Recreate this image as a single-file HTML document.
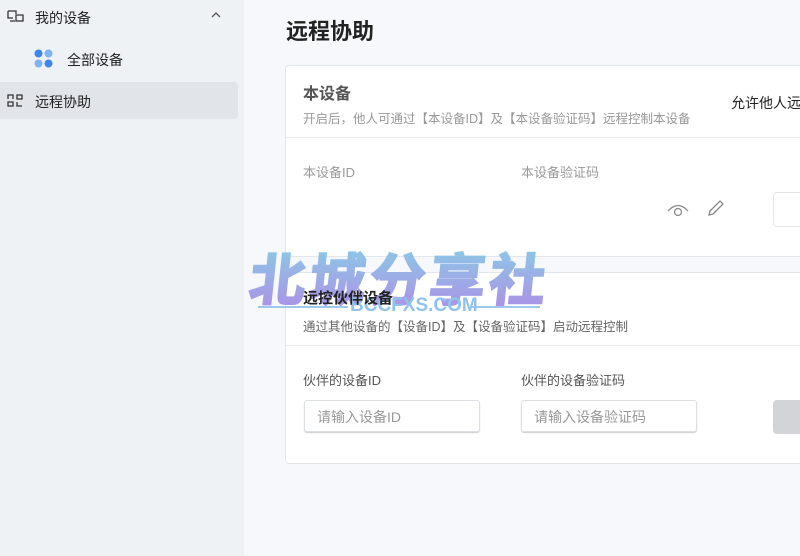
<!DOCTYPE html><html><head><meta charset="utf-8"><style>
body{margin:0;width:800px;height:556px;overflow:hidden;background:#f6f8fb;font-family:"Liberation Sans","Noto Sans CJK SC",sans-serif;position:relative;color:#222}
.side{position:absolute;left:0;top:0;width:244px;height:556px;background:#eff2f5}
.it{position:absolute;font-size:14px;color:#222}
.card{position:absolute;left:285px;width:540px;background:#fff;border:1px solid #e3e6ea;border-radius:4px}
.g{color:#888;font-size:13px;position:absolute}
.inp{position:absolute;width:176px;height:32px;border:1px solid #dcdfe3;border-radius:3px;box-shadow:0 1px 1px #ccc;font-size:14px;color:#999;line-height:32px;padding-left:12px;box-sizing:border-box}
</style></head><body>
<div class="side">
<svg style="position:absolute;left:7px;top:10px" width="18" height="14" fill="none" stroke="#333" stroke-width="1.3"><path d="M1 1h8v3M1 1v7h5M3 11h5M9 5h7v6H9z"/></svg>
<div class="it" style="left:35px;top:8px">我的设备</div>
<svg style="position:absolute;left:211px;top:11px" width="10" height="7" fill="none" stroke="#555" stroke-width="1.3"><path d="M1 6l4-4 4 4"/></svg>
<svg style="position:absolute;left:34px;top:49px" width="20" height="20"><circle cx="4.5" cy="4.5" r="4" fill="#3d86f0"/><circle cx="14.5" cy="4.5" r="4" fill="#7fb3f5"/><circle cx="4.5" cy="14.5" r="4" fill="#7fb3f5"/><circle cx="14.5" cy="14.5" r="4" fill="#3d86f0"/></svg>
<div class="it" style="left:67px;top:50px">全部设备</div>
<div style="position:absolute;left:0;top:82px;width:238px;height:37px;background:#e1e5ea;border-radius:0 4px 4px 0"></div>
<svg style="position:absolute;left:7px;top:94px" width="16" height="13" fill="none" stroke="#333" stroke-width="1.3"><path d="M1 5V1h5v4M10 1h5v4h-5zM1 8h5v4H1zM10 8v4h5"/></svg>
<div class="it" style="left:35px;top:92px">远程协助</div>
</div>
<div style="position:absolute;left:286px;top:14px;font-size:22px;font-weight:bold">远程协助</div>
<div class="card" style="top:65px;height:190px">
<div style="position:absolute;left:17px;top:14px;font-size:16px;font-weight:bold;color:#555">本设备</div>
<div class="g" style="left:17px;top:42px;color:#999;font-size:12.5px">开启后，他人可通过【本设备ID】及【本设备验证码】远程控制本设备</div>
<div style="position:absolute;left:445px;top:27px;font-size:14px">允许他人远程</div>
<div style="position:absolute;left:0;right:0;top:71px;border-top:1px solid #e8eaed"></div>
<div class="g" style="left:17px;top:96px;color:#999">本设备ID</div>
<div class="g" style="left:235px;top:96px;color:#999">本设备验证码</div>
<svg style="position:absolute;left:381px;top:137px" width="22" height="14" fill="none" stroke="#888" stroke-width="1.3"><path d="M1 8Q11-3 21 8"/><circle cx="11" cy="9" r="3.5"/></svg>
<svg style="position:absolute;left:421px;top:133px" width="18" height="18" fill="none" stroke="#888" stroke-width="1.3"><path d="M2 16l1-4L13 2l3 3L6 15z"/></svg>
<div style="position:absolute;left:487px;top:126px;width:60px;height:33px;border:1px solid #e3e6ea;border-radius:4px"></div>
</div>
<div style="position:absolute;left:250px;top:236px;z-index:1;font-size:56px;font-weight:bold;letter-spacing:4px;background:linear-gradient(#86d3e6,#b08ae6);-webkit-background-clip:text;color:transparent;-webkit-text-stroke:2px transparent;transform:skewX(-6deg);font-family:'Noto Sans CJK SC',sans-serif">北城分享社</div>
<div style="position:absolute;left:258px;top:306px;width:90px;border-top:2px solid #9ec9ec;z-index:1"></div>
<div style="position:absolute;left:470px;top:306px;width:70px;border-top:2px solid #9ec9ec;z-index:1"></div>
<div style="position:absolute;left:350px;top:295px;font-size:19px;color:#8fc3ec;font-weight:bold;z-index:1">BCCFXS.COM</div>
<div class="card" style="top:272px;height:190px;background:transparent;border:none"></div>
<div class="card" style="top:272px;height:190px;z-index:0">
<div class="g" style="left:17px;top:43px;color:#666;font-size:12.5px">通过其他设备的【设备ID】及【设备验证码】启动远程控制</div>
<div style="position:absolute;left:0;right:0;top:72px;border-top:1px solid #e8eaed"></div>
<div class="g" style="left:17px;top:97px;color:#555">伙伴的设备ID</div>
<div class="g" style="left:235px;top:97px;color:#555">伙伴的设备验证码</div>
<div class="inp" style="left:18px;top:127px">请输入设备ID</div>
<div class="inp" style="left:235px;top:127px">请输入设备验证码</div>
<div style="position:absolute;left:487px;top:127px;width:60px;height:34px;background:#d2d4d7;border-radius:4px"></div>
</div>
<div style="position:absolute;left:303px;top:287px;font-size:15px;font-weight:bold;z-index:2">远控伙伴设备</div>
</body></html>
